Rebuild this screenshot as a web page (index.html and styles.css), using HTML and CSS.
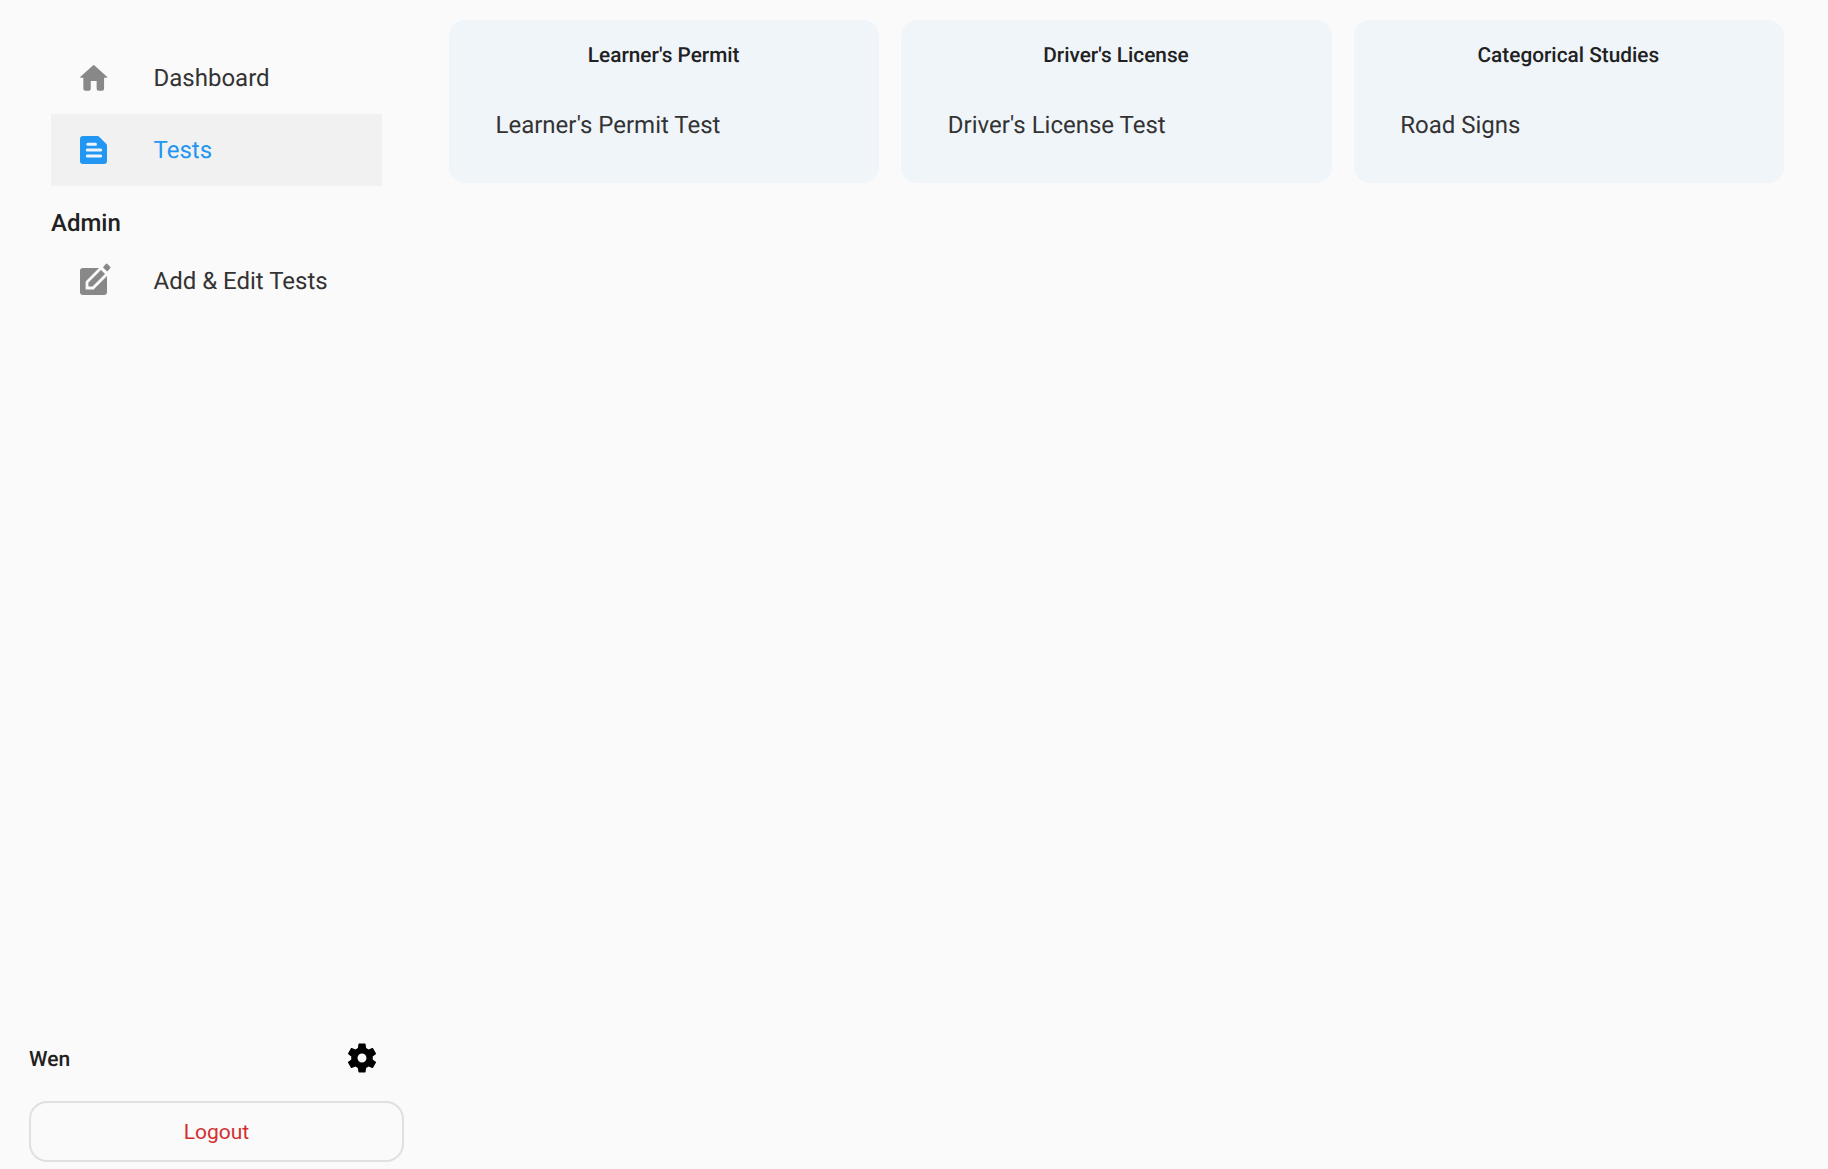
FILE: index.html
```html
<!DOCTYPE html>
<html lang="en">
<head>
<meta charset="utf-8">
<title>Tests</title>
<link rel="stylesheet" href="styles.css">
</head>
<body>
<div class="app">
  <aside class="sidebar">
    <nav class="nav">
      <a class="nav-item">
        <svg class="nav-icon" viewBox="0 -0.3 28.600 26.600" width="28" height="26"><path fill="#888" d="M12.900.5 .4 11.600c-.5.5-.2 1.200.5 1.200H3.400V24a2 2 0 0 0 2 2H9a2 2 0 0 0 2-2V16h6v8a2 2 0 0 0 2 2h3.600a2 2 0 0 0 2-2V12.800h2.500c.7 0 1-.7.5-1.200L15.100.5c-.6-.6-1.600-.6-2.200 0z"/></svg>
        <span>Dashboard</span>
      </a>
      <a class="nav-item active">
        <svg class="nav-icon" viewBox="0 0 28 28" width="28" height="28"><path fill="#2196f3" d="M3 0H17.500a2 2 0 0 1 1.400.6L26.400 8a2 2 0 0 1 .6 1.400V25a3 3 0 0 1-3 3H3a3 3 0 0 1-3-3V3a3 3 0 0 1 3-3z"/><path stroke="#eef4fb" stroke-width="3" stroke-linecap="round" fill="none" d="M7.800 8.300H15.500M7.300 14H20.700M7.300 20H20.700"/></svg>
        <span>Tests</span>
      </a>
      <h2 class="nav-heading">Admin</h2>
      <a class="nav-item">
        <svg class="nav-icon edit" viewBox="0 0 31 32" width="31" height="32"><path fill="#888" d="M3 5H22L27 10V29a3 3 0 0 1-3 3H3a3 3 0 0 1-3-3V8a3 3 0 0 1 3-3z"/><path fill="#888" stroke="#fafafa" stroke-width="2.800" stroke-linejoin="miter" d="M7 25V19L21 5 27 11 13 25z"/><path fill="#fafafa" d="M20 0H31V12H28L20 4z"/><path fill="#888" stroke="#888" stroke-width="1.500" stroke-linejoin="round" d="M26.600 1.300 29.800 4.500 27.200 7.500 23.900 4.200z"/></svg>
        <span>Add &amp; Edit Tests</span>
      </a>
    </nav>
    <div class="account">
      <div class="user-row">
        <span class="user-name">Wen</span>
        <svg class="gear" viewBox="0 0 24 24" width="36" height="36"><path d="M19.140 12.940c.04-.3.06-.61.06-.94 0-.32-.02-.64-.07-.94l2.030-1.580c.18-.14.23-.41.12-.61l-1.920-3.320c-.12-.22-.37-.29-.59-.22l-2.390.96c-.5-.38-1.030-.7-1.620-.94l-.36-2.540c-.04-.24-.24-.41-.48-.41h-3.840c-.24 0-.43.17-.47.41l-.36 2.540c-.59.24-1.130.57-1.620.94l-2.390-.96c-.22-.08-.47 0-.59.22L2.740 8.870c-.12.21-.08.47.12.61l2.030 1.580c-.05.3-.09.63-.09.94s.02.64.07.94l-2.030 1.580c-.18.14-.23.41-.12.61l1.920 3.320c.12.22.37.29.59.22l2.390-.96c.5.38 1.030.7 1.620.94l.36 2.540c.05.24.24.41.48.41h3.840c.24 0 .44-.17.47-.41l.36-2.540c.59-.24 1.130-.56 1.620-.94l2.390.96c.22.08.47 0 .59-.22l1.920-3.320c.12-.22.07-.47-.12-.61l-2.010-1.580zM12 15c-1.650 0-3-1.350-3-3s1.350-3 3-3 3 1.350 3 3-1.350 3-3 3z"/></svg>
      </div>
      <button class="logout">Logout</button>
    </div>
  </aside>
  <main class="main">
    <section class="card">
      <h3 class="card-title">Learner's Permit</h3>
      <p class="card-item">Learner's Permit Test</p>
    </section>
    <section class="card">
      <h3 class="card-title">Driver's License</h3>
      <p class="card-item">Driver's License Test</p>
    </section>
    <section class="card">
      <h3 class="card-title">Categorical Studies</h3>
      <p class="card-item">Road Signs</p>
    </section>
  </main>
</div>
</body>
</html>
```

FILE: styles.css
```css
* { box-sizing: border-box; }
html, body { margin: 0; height: 100%; }
body {
  background: #fafafa;
  font-family: Roboto, "Liberation Sans", sans-serif;
  color: #212121;
  text-rendering: geometricPrecision;
}
.app { display: flex; height: 100vh; overflow: hidden; }
.sidebar {
  width: 433px;
  flex: none;
  display: flex;
  flex-direction: column;
  justify-content: space-between;
  padding: 42px 0 7px 29px;
}
.nav { display: flex; flex-direction: column; margin-left: 22px; width: 331px; }
.nav-item {
  height: 72px;
  display: flex;
  align-items: center;
  padding-left: 29px;
  font-size: 24px;
  color: #333;
}
.nav-item span { margin-left: 46px; position: relative; left: -0.5px; }
.nav-icon { flex: none; }
.nav-icon.edit { margin-right: -3px; margin-top: -5px; }
.nav-item.active { background: #f1f1f1; color: #2196f3; }
.nav-heading { margin: 21px 0 7px; font-size: 24px; line-height: 32px; font-weight: 500; color: #212121; height: 31px; }
.account { width: 375px; }
.user-row {
  display: flex;
  justify-content: space-between;
  align-items: center;
  padding-right: 24px;
  height: 36px;
  margin-bottom: 25px;
}
.user-name { font-size: 21px; font-weight: 500; color: #212121; padding-top: 4px; }
.gear { display: block; }
.logout {
  display: block;
  width: 100%;
  height: 61px;
  background: transparent;
  border: 2px solid #e0e0e0;
  border-radius: 18px;
  font: 400 21px Roboto, "Liberation Sans", sans-serif;
  color: #d32f2f;
}
.main {
  flex: 1;
  display: grid;
  grid-template-columns: repeat(3, 1fr);
  column-gap: 22px;
  align-content: start;
  padding: 20px 44px 0 16px;
}
.card {
  height: 163px;
  background: #f0f5fa;
  border-radius: 16px;
  padding: 21px 47.5px 0 46.5px;
}
.card-title { margin: 0; font-size: 20.8px; line-height: 30px; font-weight: 500; text-align: center; color: #212121; }
.card-item { margin: 36px 0 0; font-size: 24px; line-height: 36px; color: #333; }
```
